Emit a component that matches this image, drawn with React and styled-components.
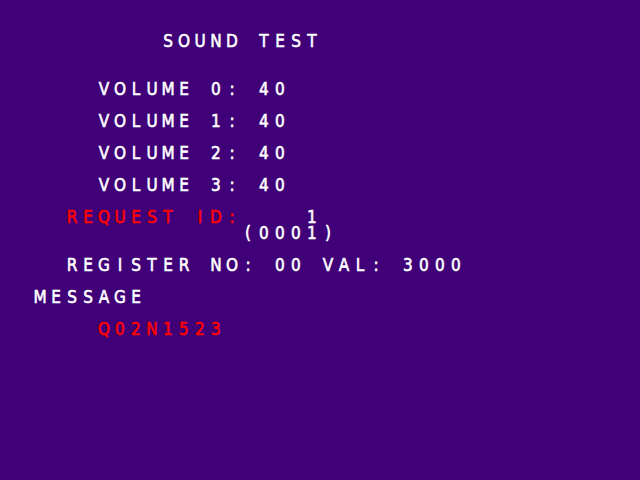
import styled, { createGlobalStyle } from "styled-components"

const GlobalStyle = createGlobalStyle`
  html, body {
    margin: 0;
    padding: 0;
    background: #400078;
  }
`

const Screen = styled.div`
  width: 640px;
  height: 480px;
  background: #400078;
  display: flex;
  flex-direction: column;
  overflow: hidden;
`

const Line = styled.div`
  height: 16px;
  display: flex;
  flex-shrink: 0;
`

const Cell = styled.span`
  width: 16px;
  height: 16px;
  flex-shrink: 0;
  display: flex;
  justify-content: center;
  font-family: "DejaVu Sans", sans-serif;
  font-size: 17px;
  line-height: 16px;
  color: ${(p) => (p.$red ? "#ff0000" : "#ffffff")};
  -webkit-text-stroke: 0.6px ${(p) => (p.$red ? "#ff0000" : "#ffffff")};
  transform: translateY(1px) scaleX(0.9);
`

// one entry per 16px text row; strings are white, { red } parts are red
const LINES = [
  [],
  [],
  ["          SOUND TEST"],
  [],
  [],
  ["      VOLUME 0: 40"],
  [],
  ["      VOLUME 1: 40"],
  [],
  ["      VOLUME 2: 40"],
  [],
  ["      VOLUME 3: 40"],
  [],
  ["    ", { red: "REQUEST ID:" }, "    1"],
  ["               (0001)"],
  [],
  ["    REGISTER NO: 00 VAL: 3000"],
  [],
  ["  MESSAGE"],
  [],
  ["      ", { red: "Q02N1523" }],
]

const TextLine = ({ parts }) => {
  const cells = []
  parts.forEach((part) => {
    const red = typeof part !== "string"
    const text = red ? part.red : part
    for (const ch of text) {
      cells.push(
        <Cell key={cells.length} $red={red}>
          {ch === " " ? "" : ch}
        </Cell>
      )
    }
  })
  return <Line>{cells}</Line>
}

const App = () => {
  return (
    <>
      <GlobalStyle />
      <Screen>
        {LINES.map((parts, i) => (
          <TextLine key={i} parts={parts} />
        ))}
      </Screen>
    </>
  )
}

export default App
